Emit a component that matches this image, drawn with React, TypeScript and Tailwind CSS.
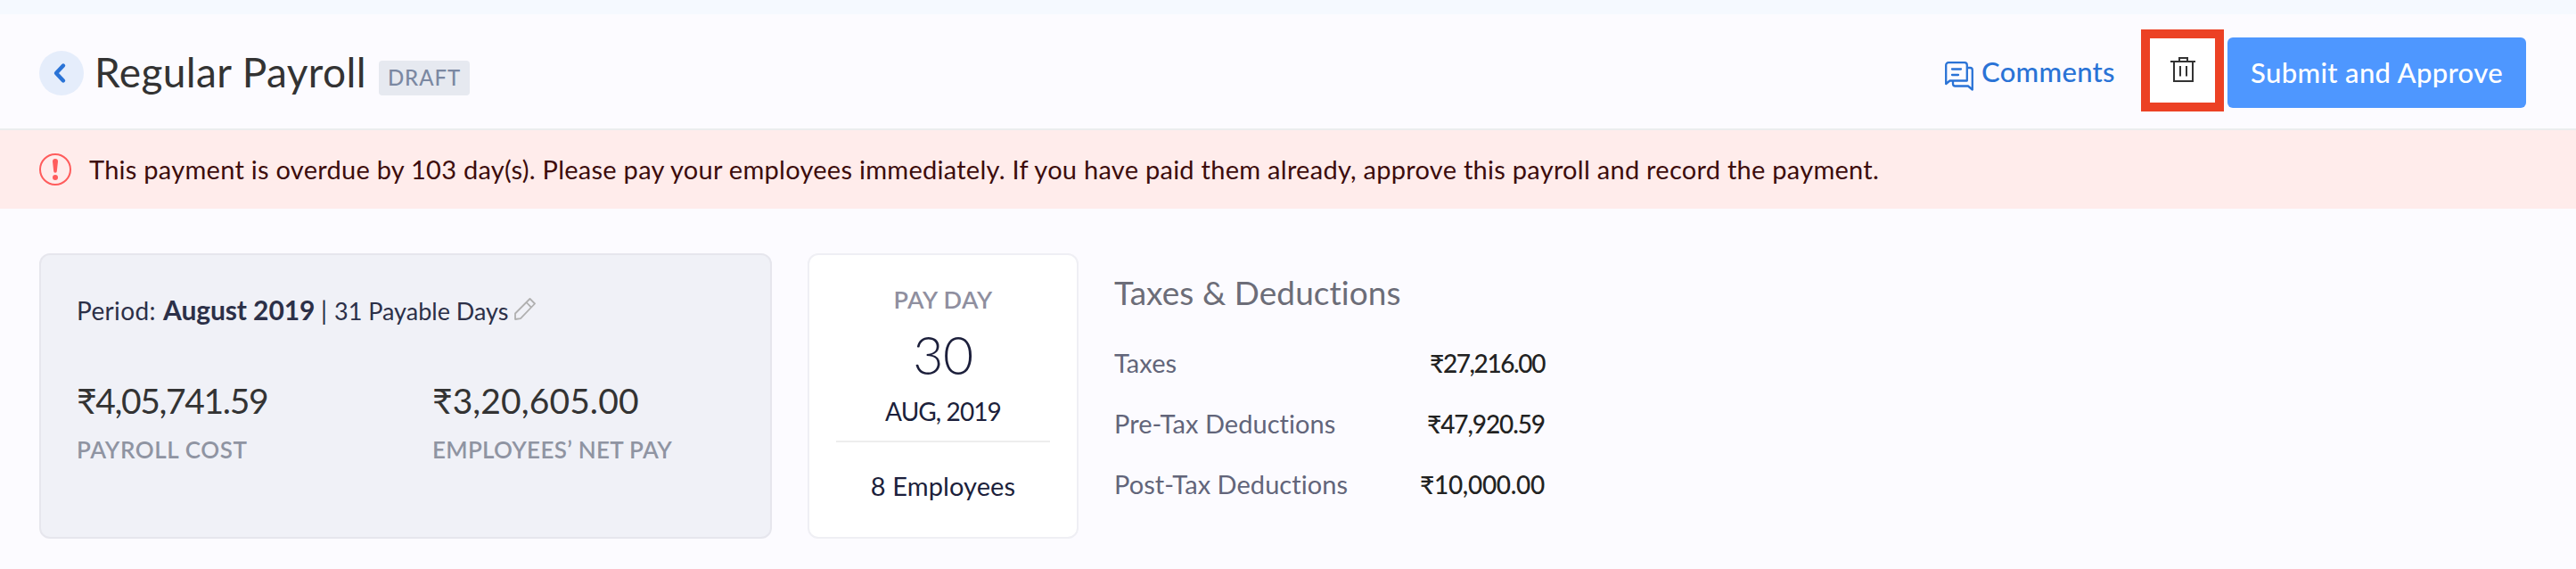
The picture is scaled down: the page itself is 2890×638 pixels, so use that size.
import clsx from "clsx";

const taxes = [
  { label: "Taxes", amount: "₹27,216.00", amountClass: "tracking-[-1.4px]" },
  { label: "Pre-Tax Deductions", amount: "₹47,920.59", amountClass: "tracking-[-1.1px]" },
  { label: "Post-Tax Deductions", amount: "₹10,000.00", amountClass: "tracking-[-0.3px]" },
];

function BackIcon() {
  return (
    <svg width="50" height="50" viewBox="0 0 50 50" fill="none">
      <path
        d="M27 16.500 19 25l8 8.500"
        stroke="#2a73d6"
        strokeWidth="4.400"
        strokeLinecap="round"
        strokeLinejoin="round"
      />
    </svg>
  );
}

function CommentsIcon() {
  return (
    <svg width="32" height="33" viewBox="0 0 32 33" fill="none" stroke="#2a73d6" strokeWidth="2.300">
      <path d="M1.200 25V4a2.800 2.800 0 0 1 2.800-2.800h18A2.800 2.800 0 0 1 24.800 4v17.500H5.500z" strokeLinejoin="round" />
      <path d="M9 22v3a2.500 2.500 0 0 0 2.500 2.500H26l4.800 4V9.500A2.500 2.500 0 0 0 28.300 7H26" strokeLinejoin="round" />
      <path d="M8 8.500h10M8 15h7" strokeLinecap="round" />
    </svg>
  );
}

function TrashIcon() {
  return (
    <svg width="28" height="28" viewBox="0 0 28 28" fill="none" stroke="#333" strokeWidth="2">
      <path d="M0 5h28" />
      <path d="M10 5V1h9v4M4 5.500V27h21V5.500" />
      <path d="M11 10v11.500M18 10v11.500" />
    </svg>
  );
}

function AlertIcon() {
  return (
    <svg width="36" height="36" viewBox="0 0 36 36" fill="none">
      <circle cx="18" cy="18" r="17" stroke="#ff5c5c" strokeWidth="2" />
      <path d="M18 6a3 3 0 0 1 3 3l-1.200 11a1.800 1.800 0 0 1-3.600 0L15 9a3 3 0 0 1 3-3z" fill="#ff5c5c" />
      <circle cx="18" cy="27" r="3" fill="#ff5c5c" />
    </svg>
  );
}

function PencilIcon() {
  return (
    <svg
      width="24"
      height="25"
      viewBox="0 0 24 25"
      fill="none"
      stroke="#b0b0b0"
      strokeWidth="1.800"
      strokeLinejoin="round"
    >
      <path d="M1 24v-6.500L17.500 1 23 6.500 7 23.200z" />
      <path d="m13.500 5 5.500 5.700" />
    </svg>
  );
}

function Header() {
  return (
    <header className="flex h-[130px] items-start justify-between border-b-2 border-[#ebedee] pl-11 pr-14">
      <div className="flex items-start">
        <button className="mt-[41px] size-[50px] rounded-full bg-[#e5edfb]">
          <BackIcon />
        </button>
        <h1 className="ml-3 mt-[35px] w-[319px] whitespace-nowrap text-[46px] leading-[60px] tracking-[0.400px] text-[#333]">
          Regular Payroll
        </h1>
        <span className="mt-[52px] h-[39px] w-[102px] rounded-[4px] bg-[#e6e9f0] text-center text-2xl leading-[38px] tracking-[0.9px] font-medium text-[#7b88a2]">
          DRAFT
        </span>
      </div>

      <div className="flex items-start">
        <a className="flex items-start text-[#2a73d6]">
          <span className="mt-[53px]">
            <CommentsIcon />
          </span>
          <span className="ml-[9px] mt-[44px] w-[179px] text-[31px] leading-[40px] font-medium tracking-[0.3px]">
            Comments
          </span>
        </a>
        <button className="mt-[17px] flex h-[92px] w-[93px] items-start justify-center border-10 border-[#ec4124] bg-white pt-[21px]">
          <TrashIcon />
        </button>
        <button className="ml-1 mt-[26px] h-[79px] w-[335px] rounded-[6px] bg-[#4e97ff] pb-[2px] text-[31px] leading-[40px] font-medium tracking-[0.35px] text-white">
          Submit and Approve
        </button>
      </div>
    </header>
  );
}

function OverdueBanner() {
  return (
    <div className="flex h-[88px] items-center bg-[#ffeceb] pl-11">
      <AlertIcon />
      <p className="ml-5 text-[29px] leading-[40px] tracking-[0.27px] whitespace-nowrap text-[#3d0c0c]">
        This payment is overdue by 103 day(s). Please pay your employees immediately. If you have paid
        them already, approve this payroll and record the payment.
      </p>
    </div>
  );
}

function PayrollCard() {
  return (
    <section className="h-[320px] w-[822px] rounded-xl border-2 border-[#e6e6ed] bg-[#f0f1f7] px-10 pt-[41px]">
      <div className="flex h-10 items-baseline whitespace-nowrap text-[28px] leading-[40px] text-[#2c3048]">
        <span className="w-[97px] tracking-[0.35px]">Period:</span>
        <span className="w-[177px] text-[30px] font-bold tracking-[-0.1px]">August 2019</span>
        <span className="w-[15px]">|</span>
        <span className="w-[202px] text-[27px]">31 Payable Days</span>
        <PencilIcon />
      </div>

      <div className="mt-[58px] grid grid-cols-[399px_1fr]">
        <div>
          <div className="text-[39px] leading-[48px] tracking-[-1.350px] text-[#333]">₹4,05,741.59</div>
          <div className="mt-[15px] text-[26px] leading-[32px] font-semibold tracking-[0.6px] text-[#8f94a2]">
            PAYROLL COST
          </div>
        </div>
        <div>
          <div className="text-[39px] leading-[48px] tracking-[0.1px] text-[#333]">₹3,20,605.00</div>
          <div className="mt-[15px] text-[26px] leading-[32px] font-semibold tracking-[0.3px] text-[#8f94a2]">
            EMPLOYEES’ NET PAY
          </div>
        </div>
      </div>
    </section>
  );
}

function PayDayCard() {
  return (
    <section className="ml-10 flex h-[320px] w-[304px] flex-col items-center rounded-xl border-2 border-[#efeff4] bg-white pt-[34px] text-[#1c1f3b]">
      <div className="text-[27px] leading-[32px] font-semibold tracking-[0.4px] text-[#8f8f9f]">PAY DAY</div>
      <div className="mt-4 text-[59px] leading-[60px] font-light tracking-[-0.5px]">30</div>
      <div className="mt-[13px] text-[28px] leading-[40px] tracking-[-0.9px]">AUG, 2019</div>
      <div className="mt-[13px] h-0.5 w-60 bg-[#ededed]" />
      <div className="mt-[29px] text-[29px] leading-[40px] tracking-[0.1px]">8 Employees</div>
    </section>
  );
}

function TaxesSummary() {
  return (
    <section className="ml-10 w-[483px] pt-[22px]">
      <h2 className="text-[37px] leading-[44px] tracking-[0.05px] text-[#6c6d78]">Taxes &amp; Deductions</h2>
      <div className="mt-[23px]">
        {taxes.map((tax) => (
          <div key={tax.label} className="flex h-[68px] items-center justify-between">
            <span className="text-[29px] tracking-[0.05px] text-[#62657a]">{tax.label}</span>
            <span className={clsx("text-[28px] font-medium text-[#222]", tax.amountClass)}>{tax.amount}</span>
          </div>
        ))}
      </div>
    </section>
  );
}

export default function App() {
  return (
    <div className="h-[638px] w-[2890px] overflow-hidden bg-[#fcfbff] font-['Lato',sans-serif]">
      <div className="h-4 bg-[#f5f9ff]" />
      <Header />
      <OverdueBanner />
      <main className="flex items-start pl-11 pt-[50px]">
        <PayrollCard />
        <PayDayCard />
        <TaxesSummary />
      </main>
    </div>
  );
}
